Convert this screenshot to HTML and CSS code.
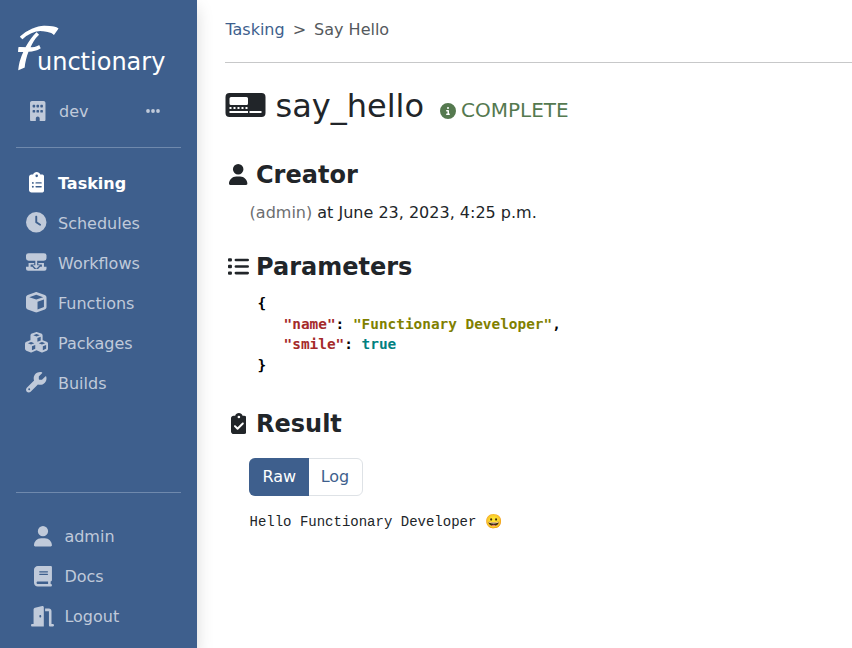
FILE: index.html
```html
<!DOCTYPE html>
<html lang="en">
<head>
<meta charset="utf-8">
<title>Functionary</title>
<link rel="stylesheet" href="styles.css">
</head>
<body>
<aside class="sidebar">
  <div class="brand"><span class="brand-initial">ℱ</span><span class="brand-rest">unctionary</span></div>
  <div class="env">
    <svg class="env-icon" viewBox="0 0 384 512"><path fill-rule="evenodd" d="M48 0C21.500 0 0 21.500 0 48V464c0 26.500 21.500 48 48 48h96V432c0-26.500 21.500-48 48-48s48 21.500 48 48v80h96c26.500 0 48-21.500 48-48V48c0-26.500-21.500-48-48-48zM80 96h32q16 0 16 16v32q0 16-16 16H80q-16 0-16-16v-32q0-16 16-16zM176 96h32q16 0 16 16v32q0 16-16 16h-32q-16 0-16-16v-32q0-16 16-16zM272 96h32q16 0 16 16v32q0 16-16 16h-32q-16 0-16-16v-32q0-16 16-16zM80 224h32q16 0 16 16v32q0 16-16 16H80q-16 0-16-16v-32q0-16 16-16zM176 224h32q16 0 16 16v32q0 16-16 16h-32q-16 0-16-16v-32q0-16 16-16zM272 224h32q16 0 16 16v32q0 16-16 16h-32q-16 0-16-16v-32q0-16 16-16z"/></svg>
    <span class="env-name">dev</span>
    <svg class="env-more" viewBox="0 0 14 4"><circle cx="2" cy="2" r="1.900"/><circle cx="7" cy="2" r="1.900"/><circle cx="12" cy="2" r="1.900"/></svg>
  </div>
  <hr class="rule">
  <nav class="menu">
    <a class="item active"><span class="slot"><svg viewBox="0 0 384 512"><path d="M192 0c-41.800 0-77.400 26.700-90.500 64H64C28.700 64 0 92.700 0 128V448c0 35.300 28.700 64 64 64H320c35.300 0 64-28.700 64-64V128c0-35.300-28.700-64-64-64H282.500C269.400 26.700 233.800 0 192 0zm0 64a32 32 0 1 1 0 64 32 32 0 1 1 0-64zM72 272a24 24 0 1 1 48 0 24 24 0 1 1-48 0zm104-16H304c8.800 0 16 7.200 16 16s-7.200 16-16 16H176c-8.800 0-16-7.200-16-16s7.200-16 16-16zM72 368a24 24 0 1 1 48 0 24 24 0 1 1-48 0zm88 0c0-8.800 7.200-16 16-16H304c8.800 0 16 7.200 16 16s-7.200 16-16 16H176c-8.800 0-16-7.200-16-16z" fill-rule="evenodd"/></svg></span><span class="label">Tasking</span></a>
    <a class="item"><span class="slot"><svg viewBox="0 0 512 512"><path fill-rule="evenodd" d="M256 0a256 256 0 1 1 0 512A256 256 0 1 1 256 0zM232 120V256c0 8 4 15.500 10.700 20l96 64c11 7.400 25.900 4.400 33.300-6.700s4.400-25.900-6.700-33.300L280 243.200V120c0-13.300-10.700-24-24-24s-24 10.700-24 24z"/></svg></span><span class="label">Schedules</span></a>
    <a class="item"><span class="slot"><svg viewBox="0 0 20 20"><path d="M2.500 1.200h15q2.500 0 2.500 2.300v2.700q0 2.300-2.500 2.300h-15Q0 8.500 0 6.200V3.500q0-2.300 2.500-2.300zM9.100 8h1.800v5h2.600L10 16.300 6.500 13h2.600zM2.500 10.800H8v1.400H4.500v2.300h1.700l2 2h3.600l2-2h1.700v-2.300H12v-1.400h5.500v3.700H20v1.800q0 2-2 2H2q-2 0-2-2v-1.800h2.500z"/></svg></span><span class="label">Workflows</span></a>
    <a class="item"><span class="slot"><svg viewBox="0 0 512 512"><path fill-rule="evenodd" d="M234.500 5.700c13.900-5 29.100-5 43.100 0l192 68.600C495 83.400 512 107.500 512 134.600V377.400c0 27-17 51.200-42.500 60.300l-192 68.600c-13.900 5-29.100 5-43.100 0l-192-68.600C17 428.600 0 404.500 0 377.400V134.600c0-27 17-51.200 42.500-60.300l192-68.600zM256 66L82.300 128 256 190l173.700-62L256 66zm32 368.600l160-57.100v-188L288 246.600v188z"/></svg></span><span class="label">Functions</span></a>
    <a class="item"><span class="slot"><svg viewBox="0 0 576 512"><path fill-rule="evenodd" d="M290.800 48.600l78.400 29.700L288 109.500 206.800 78.300l78.400-29.700c1.800-.7 3.800-.7 5.700 0zM136 92.500V204.700c-1.300 .4-2.600 .8-3.900 1.300l-96 36.400C14.400 250.600 0 271.500 0 294.700V413.900c0 22.200 13.100 42.300 33.500 51.300l96 42.200c14.400 6.300 30.700 6.300 45.100 0L288 457.500l113.500 49.900c14.400 6.300 30.700 6.300 45.100 0l96-42.200c20.300-8.900 33.500-29.100 33.500-51.300V294.700c0-23.300-14.400-44.100-36.100-52.400l-96-36.400c-1.300-.5-2.600-.9-3.900-1.300V92.500c0-23.300-14.400-44.100-36.100-52.400l-96-36.400c-12.800-4.800-26.900-4.800-39.700 0l-96 36.400C150.400 48.400 136 69.300 136 92.500zM392 210.600l-82.400 31.200V152.600L392 121v89.600zM154.800 250.900l78.400 29.700L152 311.700 70.800 280.600l78.400-29.700c1.800-.7 3.800-.7 5.700 0zm18.800 204.400V354.800L256 323.200v95.900l-82.400 36.200zM421.200 250.900c1.800-.7 3.800-.7 5.700 0l78.400 29.700L424 311.700l-81.200-31.100 78.400-29.700zM523.200 421.200l-77.600 34.100V354.800L528 323.200v90.700c0 3.200-1.900 6-4.800 7.300z"/></svg></span><span class="label">Packages</span></a>
    <a class="item"><span class="slot"><svg viewBox="0 0 512 512"><path fill-rule="evenodd" d="M352 320c88.400 0 160-71.600 160-160c0-15.300-2.200-30.100-6.200-44.200c-3.100-10.800-16.400-13.200-24.300-5.300l-76.800 76.800c-3 3-7.100 4.700-11.300 4.700H336c-8.800 0-16-7.200-16-16V118.600c0-4.200 1.700-8.300 4.700-11.300l76.800-76.800c7.900-7.900 5.400-21.200-5.300-24.300C382.100 2.200 367.300 0 352 0C263.600 0 192 71.600 192 160c0 19.100 3.400 37.500 9.500 54.500L19.900 396.100C7.200 408.800 0 426.100 0 444.100C0 481.600 30.400 512 67.900 512c18 0 35.300-7.200 48-19.900L297.500 310.500c17 6.200 35.400 9.500 54.500 9.500zM80 408a24 24 0 1 1 0 48 24 24 0 1 1 0-48z"/></svg></span><span class="label">Builds</span></a>
  </nav>
  <hr class="rule rule-bottom">
  <nav class="menu account">
    <a class="item"><span class="slot"><svg viewBox="0 0 448 512"><path d="M224 256A128 128 0 1 0 224 0a128 128 0 1 0 0 256zm-45.700 48C79.800 304 0 383.800 0 482.300C0 498.700 13.300 512 29.700 512H418.300c16.400 0 29.700-13.300 29.700-29.700C448 383.800 368.200 304 269.700 304H178.300z"/></svg></span><span class="label">admin</span></a>
    <a class="item"><span class="slot"><svg viewBox="0 0 448 512"><path fill-rule="evenodd" d="M96 0C43 0 0 43 0 96V416c0 53 43 96 96 96H416c17.700 0 32-14.300 32-32s-14.300-32-32-32V384c17.700 0 32-14.300 32-32V32c0-17.700-14.300-32-32-32H96zm0 384H352v64H96c-17.700 0-32-14.300-32-32s14.300-32 32-32zm32-240c0-8.800 7.200-16 16-16H336c8.800 0 16 7.200 16 16s-7.200 16-16 16H144c-8.800 0-16-7.200-16-16zm16 48H336c8.800 0 16 7.200 16 16s-7.200 16-16 16H144c-8.800 0-16-7.200-16-16s7.200-16 16-16z"/></svg></span><span class="label">Docs</span></a>
    <a class="item"><span class="slot"><svg viewBox="0 0 576 512"><path fill-rule="evenodd" d="M320 32c0-9.900-4.500-19.200-12.300-25.200S289.800-1.400 280.200 1l-179.900 45C79 51.300 64 70.500 64 92.500V448H32c-17.700 0-32 14.300-32 32s14.300 32 32 32H320V32zM256 256c0 17.700-10.700 32-24 32s-24-14.300-24-32s10.700-32 24-32s24 14.300 24 32zm96-128h96V480c0 17.700 14.300 32 32 32h64c17.700 0 32-14.300 32-32s-14.300-32-32-32H512V128c0-35.300-28.700-64-64-64H352v64z"/></svg></span><span class="label">Logout</span></a>
  </nav>
</aside>
<main class="main">
  <div class="crumbs"><a class="crumb-link">Tasking</a><span>&gt;</span><span>Say Hello</span></div>
  <header class="title">
    <svg class="title-icon" viewBox="0 0 41 25"><path fill-rule="evenodd" d="M4.500 0h32q4 0 4 4v16q0 4-4 4h-32q-4 0-4-4V4q0-4 4-4zM6 4q-1.500 0-1.500 1.500v5Q4.500 12 6 12h15.500q1.500 0 1.500-1.500v-5Q23 4 21.500 4zM4.500 14v2h2v-2zM8.500 14v2h2v-2zM12.500 14v2h2v-2zM16.500 14v2h2v-2zM20.500 14v2h2v-2zM4.500 18v2H23v-2zM24.500 18v2h12v-2z"/></svg>
    <h1>say_hello</h1>
    <span class="status"><svg viewBox="0 0 512 512"><path fill-rule="evenodd" d="M256 512A256 256 0 1 0 256 0a256 256 0 1 0 0 512zM216 336h24V272H216c-13.300 0-24-10.700-24-24s10.700-24 24-24h48c13.300 0 24 10.700 24 24v88h8c13.300 0 24 10.700 24 24s-10.700 24-24 24H216c-13.300 0-24-10.700-24-24s10.700-24 24-24zm40-208a32 32 0 1 1 0 64 32 32 0 1 1 0-64z"/></svg>COMPLETE</span>
  </header>
  <section class="creator">
    <h2><span class="h-slot"><svg viewBox="0 0 448 512"><path d="M224 256A128 128 0 1 0 224 0a128 128 0 1 0 0 256zm-45.700 48C79.800 304 0 383.800 0 482.300C0 498.700 13.300 512 29.700 512H418.300c16.400 0 29.700-13.300 29.700-29.700C448 383.800 368.200 304 269.700 304H178.300z"/></svg></span>Creator</h2>
    <p><span class="muted">(admin)</span> at June 23, 2023, 4:25 p.m.</p>
  </section>
  <section class="params">
    <h2><span class="h-slot"><svg viewBox="0 0 512 512"><path d="M24 56h48q24 0 24 24v32q0 24-24 24H24q-24 0-24-24V80q0-24 24-24zM24 216h48q24 0 24 24v32q0 24-24 24H24q-24 0-24-24v-32q0-24 24-24zM24 376h48q24 0 24 24v32q0 24-24 24H24q-24 0-24-24v-32q0-24 24-24zM192 64H480a32 32 0 0 1 0 64H192a32 32 0 0 1 0-64zM192 224H480a32 32 0 0 1 0 64H192a32 32 0 0 1 0-64zM192 384H480a32 32 0 0 1 0 64H192a32 32 0 0 1 0-64z"/></svg></span>Parameters</h2>
    <div class="json">
      <div>{</div>
      <div class="nested"><span class="key">"name"</span>: <span class="str">"Functionary Developer"</span>,</div>
      <div class="nested"><span class="key">"smile"</span>: <span class="bool">true</span></div>
      <div>}</div>
    </div>
  </section>
  <section class="result">
    <h2><span class="h-slot"><svg viewBox="0 0 384 512"><path fill-rule="evenodd" d="M192 0c-41.800 0-77.400 26.700-90.500 64H64C28.700 64 0 92.700 0 128V448c0 35.300 28.700 64 64 64H320c35.300 0 64-28.700 64-64V128c0-35.300-28.700-64-64-64H282.500C269.400 26.700 233.800 0 192 0zm0 64a32 32 0 1 1 0 64 32 32 0 1 1 0-64zM305 273L177 401c-9.400 9.400-24.600 9.400-33.900 0L79 337c-9.400-9.400-9.400-24.600 0-33.900s24.600-9.400 33.900 0l47 47L271 239c9.400-9.400 24.600-9.400 33.900 0s9.400 24.600 0 33.900z"/></svg></span>Result</h2>
    <div class="tabs"><span class="tab on">Raw</span><span class="tab">Log</span></div>
    <pre class="output">Hello Functionary Developer 😀</pre>
  </section>
</main>
</body>
</html>
```
FILE: styles.css
```css
* { box-sizing: border-box; }
body {
  margin: 0;
  display: flex;
  height: 648px;
  overflow: hidden;
  font: 16px/24px "DejaVu Sans", sans-serif;
  color: #212529;
  background: #fff;
}
svg { fill: currentColor; display: block; }

.sidebar {
  width: 197px;
  height: 648px;
  flex: none;
  padding: 16px;
  display: flex;
  flex-direction: column;
  background: #3e5f8d;
  color: #c0cada;
  box-shadow: 0 8px 16px rgba(0, 0, 0, .15);
}
.brand {
  height: 71px;
  padding-top: 5px;
  display: flex;
  align-items: baseline;
  color: #fff;
  font-size: 24px;
  line-height: 60px;
  white-space: nowrap;
}
.brand-initial {
  width: 21px;
  font-family: "DejaVu Math TeX Gyre", "DejaVu Serif", serif;
  font-size: 64px;
  -webkit-text-stroke: 2px #fff;
  transform: translate(-7.5px, -2px) skewX(-15deg) scale(.7, .85);
  transform-origin: 0 51px;
}
.env { height: 48px; padding: 0 21px 0 14px; display: flex; align-items: center; }
.env-icon { width: 15.5px; height: 20.6px; }
.env-name { margin: 2px 0 0 13.5px; }
.env-more { width: 14px; height: 4px; margin-left: auto; }
.rule {
  width: 165px;
  height: 1px;
  margin: 12px 0 15px;
  border: 0;
  background: #6f89ad;
  flex: none;
}
.rule-bottom { margin: auto 0 24px; }
.item { display: flex; align-items: center; height: 40px; padding-left: 8px; }
.slot { width: 25px; margin-right: 9px; display: flex; justify-content: center; }
.slot svg { height: 20.5px; margin-bottom: 1px; }
.label { padding-top: 1px; margin-top: 1px; }
.active { color: #fff; font-weight: bold; }
.account { margin-bottom: -5px; }
.account .item { padding-left: 14.4px; }
.account .label { padding: 0; margin: 0; }

.main { flex: 1; padding: 0 0 0 28px; }
.crumbs {
  height: 63px;
  padding: 18px 0 0 .4px;
  display: flex;
  gap: 8px;
  color: #55595d;
  border-bottom: 1px solid #c7c8c9;
}
.crumb-link, .tab { color: #3e5f8d; }
.title { display: flex; align-items: baseline; height: 96px; padding-top: 23px; }
.title-icon { width: 41px; height: 25px; margin-right: 9.5px; align-self: flex-start; margin-top: 7px; }
h1 { margin: 0; font-size: 32px; line-height: 40px; font-weight: normal; }
.status { display: flex; align-items: center; margin-left: 16px; font-size: 20px; color: #55794f; position: relative; top: 2px; }
.status svg { width: 16px; height: 16px; margin: 2px 5px 0 0; }
h2 { margin: 0; display: flex; align-items: center; font-size: 24px; line-height: 32px; }
.h-slot { width: 27px; margin: 0 4px 2px 0; display: flex; justify-content: center; }
.h-slot svg { height: 21px; }
p { margin: 10px 0 0 24.6px; }
.muted { color: #6c6e70; }
.creator { height: 92px; }
.params { height: 157px; }
.json {
  margin: 10.4px 0 0 32.6px;
  font: bold 14.4px/20.4px "DejaVu Sans Mono", monospace;
  color: #000;
}
.nested { padding-left: 26px; }
.key { color: #a52a2a; }
.str { color: #808000; }
.bool { color: #008080; }
.tabs {
  width: 114px;
  height: 38px;
  margin: 18px 0 0 24px;
  display: flex;
  border: 1px solid #dee2e6;
  border-radius: 6px;
}
.tab { padding: 6px 12px; }
.on { margin: -1px 0 -1px -1px; padding: 7px 12.5px 7px 13.5px; color: #fff; background: #3e5f8d; border-radius: 6px 0 0 6px; }
.output { margin: 16px 0 0 24.500px; font: 14px/21px "Liberation Mono", monospace; }
```
